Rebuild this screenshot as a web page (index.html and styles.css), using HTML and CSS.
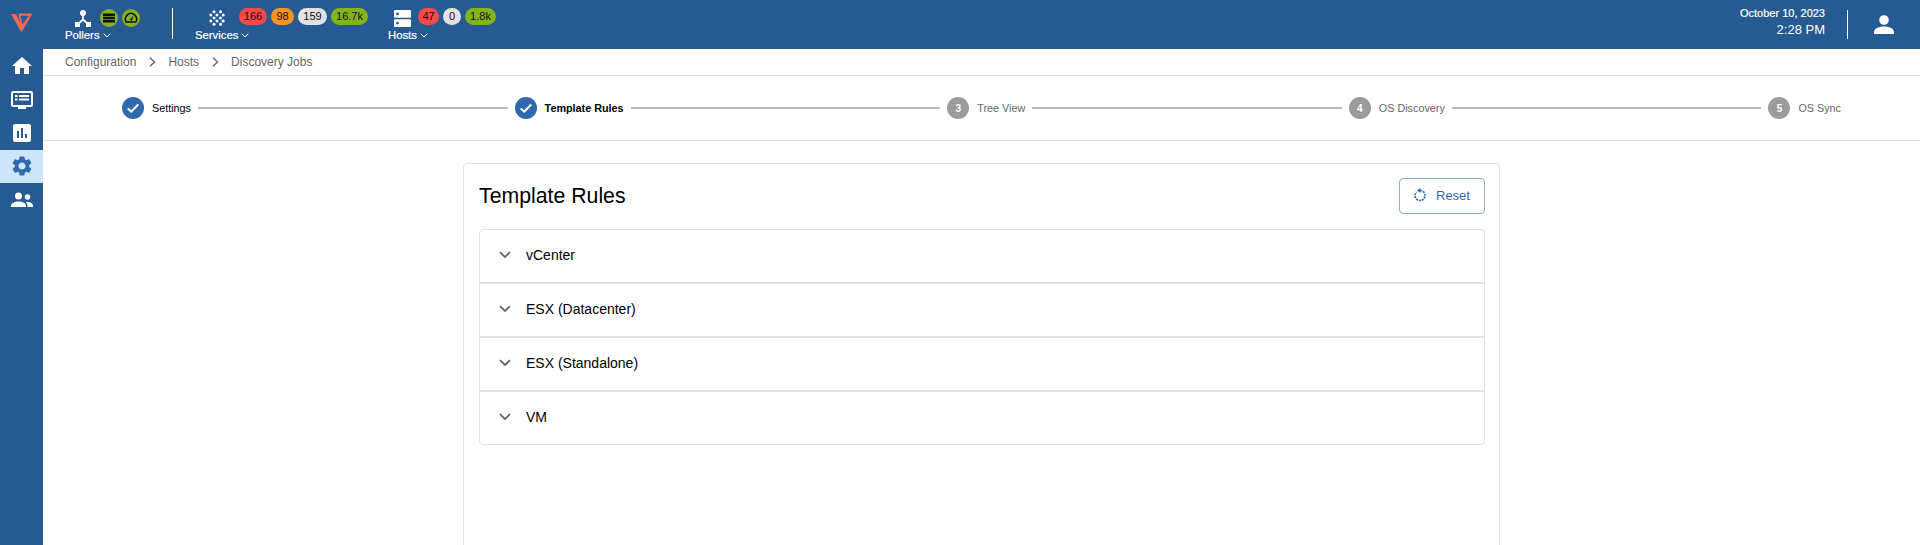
FILE: index.html
```html
<!DOCTYPE html>
<html lang="en">
<head>
<meta charset="utf-8">
<title>Template Rules</title>
<link rel="stylesheet" href="styles.css">
</head>
<body>
<header class="topbar">
  <div class="logo-cell">
    <svg class="logo" viewBox="0 0 22 20"><path d="M0 1H5L11 14 10.500 19.500Z" fill="#ee6a50"/><path d="M7.500 .5H21.500L10.500 19.500ZM9.500 2.800L11.500 11.500 17.800 2.800Z" fill="#ee6a50" fill-rule="evenodd"/></svg>
  </div>
  <div class="group group-pollers">
    <div class="group-top">
      <svg class="ico-pollers" viewBox="0 0 16 17"><circle cx="8" cy="3" r="3" fill="#fff"/><rect x="0" y="12" width="5" height="5" fill="#fff"/><rect x="11" y="12" width="5" height="5" fill="#fff"/><path d="M8 3V9.500L2.500 14.500M8 9.500L13.500 14.500" stroke="#fff" stroke-width="1.700" fill="none"/></svg>
      <div class="round-badges">
        <span class="round green"><svg viewBox="0 0 14 14"><path d="M1 2.500h12v2.400H1zM1 5.800h12v2.400H1zM1 9.100h12v2.400H1z" fill="#111"/></svg></span>
        <span class="round green"><svg viewBox="0 0 14 14"><path d="M2.200 11A5.600 5.600 0 1 1 11.800 11Z" fill="none" stroke="#111" stroke-width="1.500"/><path d="M5.800 8.800L9.500 4.500 7.800 9.700Z" fill="#111"/></svg></span>
      </div>
    </div>
    <div class="group-label">Pollers<svg class="caret" viewBox="0 0 8 5"><path d="M.7.7L4 4 7.300.7" fill="none" stroke="#fff" stroke-width="1"/></svg></div>
  </div>
  <div class="vsep vsep-left"></div>
  <div class="group group-services">
    <div class="group-top">
      <svg class="ico-services" viewBox="0 0 16 16"><g fill="#fff"><circle cx="5" cy="1.800" r="1.500"/><circle cx="11.500" cy="1.800" r="1.500"/><circle cx="1.800" cy="5" r="1.500"/><circle cx="8" cy="5" r="1.500"/><circle cx="14.200" cy="5" r="1.500"/><circle cx="5" cy="8" r="1.500"/><circle cx="11.500" cy="8" r="1.500"/><circle cx="1.800" cy="11" r="1.500"/><circle cx="8" cy="11" r="1.500"/><circle cx="14.200" cy="11" r="1.500"/><circle cx="5" cy="14.200" r="1.500"/><circle cx="11.500" cy="14.200" r="1.500"/></g></svg>
      <div class="badges">
        <span class="badge red b-w28">166</span>
        <span class="badge orange b-w23">98</span>
        <span class="badge grey b-w29">159</span>
        <span class="badge green b-w37">16.7k</span>
      </div>
    </div>
    <div class="group-label">Services<svg class="caret" viewBox="0 0 8 5"><path d="M.7.7L4 4 7.300.7" fill="none" stroke="#fff" stroke-width="1"/></svg></div>
  </div>
  <div class="group group-hosts">
    <div class="group-top">
      <svg class="ico-hosts" viewBox="0 0 17 17"><path d="M1 0h15a1 1 0 0 1 1 1v5.700a1 1 0 0 1-1 1H1a1 1 0 0 1-1-1V1a1 1 0 0 1 1-1zm0 9.300h15a1 1 0 0 1 1 1V16a1 1 0 0 1-1 1H1a1 1 0 0 1-1-1v-5.700a1 1 0 0 1 1-1z" fill="#fff"/><circle cx="3.500" cy="3.900" r="1.400" fill="#255a92"/><circle cx="3.500" cy="13.100" r="1.400" fill="#255a92"/></svg>
      <div class="badges">
        <span class="badge red b-w21">47</span>
        <span class="badge grey b-w18">0</span>
        <span class="badge green b-w31">1.8k</span>
      </div>
    </div>
    <div class="group-label">Hosts<svg class="caret" viewBox="0 0 8 5"><path d="M.7.7L4 4 7.300.7" fill="none" stroke="#fff" stroke-width="1"/></svg></div>
  </div>
  <div class="clock">
    <div class="clock-date">October 10, 2023</div>
    <div class="clock-time">2:28 PM</div>
  </div>
  <div class="vsep vsep-right"></div>
  <svg class="ico-user" viewBox="0 0 20 20"><circle cx="10" cy="5" r="4.800" fill="#fff"/><path d="M0 19v-1.500C0 13.500 4.500 11.500 10 11.500s10 2 10 6V19Z" fill="#fff"/></svg>
</header>
<div class="shell">
  <nav class="sidebar">
    <a class="nav-item"><svg viewBox="0 0 24 24"><path d="M10 20v-6h4v6h5v-8h3L12 3 2 12h3v8z"/></svg></a>
    <a class="nav-item"><svg viewBox="0 -1 24 24"><path d="M3 3h18a2 2 0 0 1 2 2v12a2 2 0 0 1-2 2h-5v2H8v-2H3a2 2 0 0 1-2-2V5a2 2 0 0 1 2-2zm.5 2a.5.5 0 0 0-.5.5v11a.5.5 0 0 0 .5.5h17a.5.5 0 0 0 .5-.5v-11a.5.5 0 0 0-.5-.5zM5 7h2.500v2H5zm4 0h10v2H9zm-4 3.500h2.500v2H5zm4 0h10v2H9z" fill-rule="evenodd"/></svg></a>
    <a class="nav-item"><svg viewBox="0 0 24 24"><path d="M19 3H5c-1.100 0-2 .9-2 2v14c0 1.100.9 2 2 2h14c1.100 0 2-.9 2-2V5c0-1.100-.9-2-2-2zM9 17H7v-7h2v7zm4 0h-2V7h2v10zm4 0h-2v-4h2v4z"/></svg></a>
    <a class="nav-item active"><svg viewBox="0 0 24 24"><path d="M19.140 12.940c.04-.3.06-.61.06-.94 0-.32-.02-.64-.07-.94l2.030-1.580c.18-.14.23-.41.12-.61l-1.920-3.320c-.12-.22-.37-.29-.59-.22l-2.390.96c-.5-.38-1.030-.7-1.620-.94l-.36-2.540c-.04-.24-.24-.41-.48-.41h-3.840c-.24 0-.43.17-.47.41l-.36 2.540c-.59.24-1.130.57-1.620.94l-2.390-.96c-.22-.08-.47 0-.59.22L2.740 8.870c-.12.21-.08.47.12.61l2.030 1.580c-.05.3-.09.63-.09.94s.02.64.07.94l-2.030 1.580c-.18.14-.23.41-.12.61l1.920 3.320c.12.22.37.29.59.22l2.390-.96c.5.38 1.030.7 1.620.94l.36 2.540c.05.24.24.41.48.41h3.840c.24 0 .44-.17.47-.41l.36-2.540c.59-.24 1.130-.56 1.620-.94l2.390.96c.22.08.47 0 .59-.22l1.920-3.320c.12-.22.07-.47-.12-.61l-2.010-1.580zM12 15.600c-1.980 0-3.600-1.620-3.600-3.600s1.620-3.600 3.600-3.600 3.600 1.620 3.600 3.600-1.620 3.600-3.600 3.600z"/></svg></a>
    <a class="nav-item"><svg viewBox="0 0 24 24"><circle cx="8.500" cy="8" r="3.500"/><circle cx="17.500" cy="9" r="2.800"/><path d="M1 19v-1c0-3 3.500-4.500 7.500-4.500s7.500 1.500 7.500 4.500v1zM17.500 19v-1c0-1.500-.6-2.800-1.800-3.800 3.600-.6 7.300.8 7.300 3.300V19z"/></svg></a>
  </nav>
  <main class="content">
    <div class="breadcrumb">
      <span>Configuration</span>
      <svg class="crumb-sep" viewBox="0 0 7 10"><path d="M1 .8L5.500 5 1 9.200" fill="none" stroke="#666" stroke-width="1.400"/></svg>
      <span>Hosts</span>
      <svg class="crumb-sep" viewBox="0 0 7 10"><path d="M1 .8L5.500 5 1 9.200" fill="none" stroke="#666" stroke-width="1.400"/></svg>
      <span>Discovery Jobs</span>
    </div>
    <div class="stepper">
      <div class="step done"><span class="step-dot"><svg viewBox="0 0 12 12"><path d="M1.500 6.500L4.500 9.200 10.500 3" fill="none" stroke="#fff" stroke-width="1.700"/></svg></span><span class="step-label">Settings</span></div>
      <div class="step-line"></div>
      <div class="step done"><span class="step-dot"><svg viewBox="0 0 12 12"><path d="M1.500 6.500L4.500 9.200 10.500 3" fill="none" stroke="#fff" stroke-width="1.700"/></svg></span><span class="step-label strong">Template Rules</span></div>
      <div class="step-line"></div>
      <div class="step"><span class="step-dot">3</span><span class="step-label">Tree View</span></div>
      <div class="step-line"></div>
      <div class="step"><span class="step-dot">4</span><span class="step-label">OS Discovery</span></div>
      <div class="step-line"></div>
      <div class="step"><span class="step-dot">5</span><span class="step-label">OS Sync</span></div>
    </div>
    <section class="card">
      <div class="card-head">
        <h1 class="card-title">Template Rules</h1>
        <button class="reset-btn"><svg viewBox="0 0 14 14"><path d="M7 2.500A5 5 0 1 1 2 7.500A5 5 0 0 1 3.500 4" fill="none" stroke="#2f6aad" stroke-width="1.700" stroke-dasharray="2 .9"/><path d="M7.500 0v5L4 2.500Z" fill="#2f6aad"/></svg>Reset</button>
      </div>
      <div class="accordion">
        <div class="acc-row"><svg class="acc-chev" viewBox="0 0 12 8"><path d="M1 1.200L6 6l5-4.800" fill="none" stroke="#666" stroke-width="1.800"/></svg>vCenter</div>
        <div class="acc-row"><svg class="acc-chev" viewBox="0 0 12 8"><path d="M1 1.200L6 6l5-4.800" fill="none" stroke="#666" stroke-width="1.800"/></svg>ESX (Datacenter)</div>
        <div class="acc-row"><svg class="acc-chev" viewBox="0 0 12 8"><path d="M1 1.200L6 6l5-4.800" fill="none" stroke="#666" stroke-width="1.800"/></svg>ESX (Standalone)</div>
        <div class="acc-row"><svg class="acc-chev" viewBox="0 0 12 8"><path d="M1 1.200L6 6l5-4.800" fill="none" stroke="#666" stroke-width="1.800"/></svg>VM</div>
      </div>
    </section>
  </main>
</div>
</body>
</html>
```

FILE: styles.css
```css
* { box-sizing: border-box; }
html, body { margin: 0; height: 100%; overflow: hidden; }
body { font-family: "Liberation Sans", Arial, sans-serif; background: #fff; color: #000; }

.topbar { display: flex; align-items: flex-start; height: 49px; background: #255a92; color: #fff; }
.logo-cell { width: 43px; flex: none; padding: 13px 0 0 11px; }
.logo { display: block; width: 22px; height: 20px; }

.group { flex: none; display: flex; flex-direction: column; padding-top: 8px; }
.group-top { display: flex; align-items: flex-start; height: 20px; }
.group-label { display: flex; align-items: center; height: 14px; font-size: 11.300px; line-height: 14px; -webkit-text-stroke: .2px #fff; }
.caret { width: 8px; height: 5px; margin-left: 3px; }

.group-pollers { margin-left: 22px; width: 107px; }
.group-pollers .group-top { padding-left: 10px; }
.ico-pollers { width: 16px; height: 17px; margin-top: 2px; }
.round-badges { display: flex; gap: 4px; margin-left: 9px; margin-top: 1px; }
.round { display: flex; align-items: center; justify-content: center; width: 18px; height: 18px; border-radius: 50%; }
.round svg { width: 14px; height: 14px; }

.vsep { flex: none; width: 1px; background: #fff; }
.vsep-left { height: 31px; margin-top: 8px; }
.vsep-right { height: 29px; margin: 10px 26px 0 22px; }

.group-services { margin-left: 22px; width: 193px; }
.group-services .group-top { padding-left: 14px; }
.ico-services { width: 16px; height: 16px; margin-top: 2px; }
.group-hosts { width: 120px; }
.group-hosts .group-top { padding-left: 6px; }
.ico-hosts { width: 17px; height: 17px; margin-top: 2px; }
.badges { display: flex; gap: 4px; margin-left: 14px; }
.group-hosts .badges { margin-left: 7px; }
.badge { display: block; height: 17px; border-radius: 9px; font-size: 11px; line-height: 17px; text-align: center; color: #111; }
.b-w18 { width: 18px; } .b-w21 { width: 21px; } .b-w23 { width: 23px; } .b-w28 { width: 28px; } .b-w29 { width: 29px; } .b-w31 { width: 31px; } .b-w37 { width: 37px; }
.red { background: #f94a4a; }
.orange { background: #f7941e; }
.grey { background: #e2e2e2; }
.green { background: #84b31a; }

.clock { margin-left: auto; padding-top: 7px; text-align: right; }
.clock-date { font-size: 11px; line-height: 13px; -webkit-text-stroke: .2px #fff; }
.clock-time { font-size: 13px; line-height: 17px; margin-top: 1px; }
.ico-user { flex: none; width: 20px; height: 20px; margin: 15px 26px 0 0; }

.shell { display: flex; height: 496px; }
.sidebar { flex: none; width: 43px; background: #255a92; }
.nav-item { display: flex; align-items: center; justify-content: center; height: 33.500px; }
.nav-item svg { width: 24px; height: 24px; fill: #fff; }
.nav-item.active { background: #cce5fb; }
.nav-item.active svg { fill: #2f6aad; }

.content { flex: 1; min-width: 0; overflow: hidden; }
.breadcrumb { display: flex; align-items: center; height: 27px; padding-left: 22px; border-bottom: 1px solid #e2e2e2; font-size: 12px; color: #666; }
.crumb-sep { width: 7px; height: 10px; margin: 0 12.500px; }

.stepper { display: flex; align-items: center; height: 65px; padding: 0 79px; border-bottom: 1px solid #e2e2e2; }
.step { flex: none; display: flex; align-items: center; gap: 8px; }
.step-dot { display: flex; align-items: center; justify-content: center; width: 22px; height: 22px; border-radius: 50%; background: #9b9b9b; color: #fff; font-size: 10px; font-weight: 700; }
.step.done .step-dot { background: #2f69ab; }
.step-dot svg { width: 14px; height: 14px; }
.step-label { font-size: 10.800px; color: #666; }
.step.done .step-label { color: #000; }
.step-label.strong { font-weight: 700; }
.step-line { flex: 1; height: 1.500px; margin: 0 7px; background: #b8b8b8; }

.card { width: 1037px; height: 500px; margin: 22px 0 0 420px; padding: 14px 14px 0 15px; border: 1px solid #e2e2e2; border-radius: 4px; }
.card-head { display: flex; align-items: center; justify-content: space-between; height: 36px; margin-bottom: 15px; }
.card-title { margin: 0; font-size: 21.280px; font-weight: 400; }
.reset-btn { display: flex; align-items: center; gap: 9px; width: 86px; height: 36px; padding: 0 0 2px 13px; background: #fff; border: 1px solid #8db0d5; border-radius: 4px; font: 13px "Liberation Sans", Arial, sans-serif; color: #2f6aad; }
.reset-btn svg { width: 14px; height: 14px; }

.accordion { border: 1px solid #e2e2e2; border-radius: 4px; }
.acc-row { display: flex; align-items: center; height: 54px; padding: 0 0 2px 19px; border-top: 2px solid #e2e2e2; font-size: 14px; }
.acc-row:first-child { border-top: 0; height: 52px; }
.acc-chev { width: 12px; height: 8px; margin-right: 15px; }
```
